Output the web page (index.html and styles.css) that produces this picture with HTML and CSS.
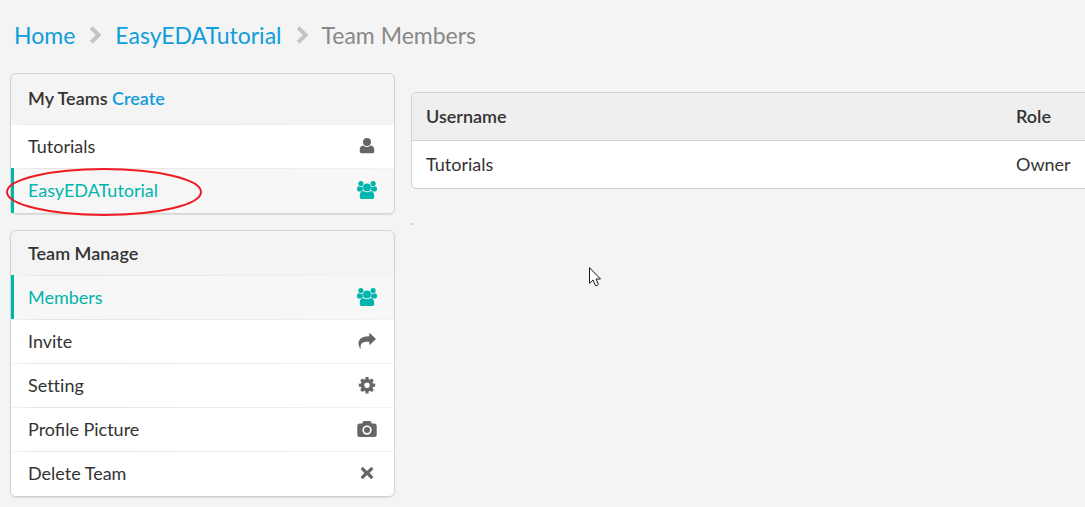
FILE: index.html
```html
<!DOCTYPE html>
<html lang="en">
<head>
<meta charset="utf-8">
<meta name="viewport" content="width=device-width, initial-scale=1">
<title>Team Members</title>
<link rel="stylesheet" href="styles.css">
</head>
<body>
<svg class="sprite" aria-hidden="true">
  <symbol id="users" viewBox="0 0 20 18">
    <circle cx="3.900" cy="2.600" r="2.600"/><circle cx="16.100" cy="2.600" r="2.600"/>
    <path d="M1.800 5.200Q3.900 6.600 5.800 5.500Q5.300 7.700 6.400 9Q5 9.300 4.200 10.500H1.800Q0 10.400 0 8.400Q0 5.200 1.800 5.200ZM18.200 5.200Q16.100 6.600 14.200 5.500Q14.700 7.700 13.600 9Q15 9.300 15.800 10.500H18.200Q20 10.400 20 8.400Q20 5.200 18.200 5.200Z"/>
    <circle cx="10" cy="6.400" r="3.900"/>
    <path d="M6.200 9.900Q10 12.700 13.800 9.900C16.600 10 17.200 12.800 17.200 15.400Q17.200 18 14.700 18H5.300Q2.800 18 2.800 15.400C2.800 12.800 3.400 10 6.200 9.900Z"/>
  </symbol>
  <symbol id="user" viewBox="0 0 20 18">
    <circle cx="10" cy="5" r="4"/>
    <path d="M6.200 8.400Q10 11.500 13.800 8.400C16.600 8.600 17.300 11.300 17.300 13.700Q17.300 16.300 14.800 16.300H5.200Q2.700 16.300 2.700 13.700C2.700 11.300 3.400 8.600 6.200 8.400Z"/>
  </symbol>
  <symbol id="share" viewBox="0 0 20 18">
    <path d="M12.300 1.600Q12.400.900 13 1.300L18.500 6.500Q19 7 18.500 7.500L13 12.700Q12.300 13 12.300 12.300V9.700C6 9.500 3.200 10.700 3.700 16Q3.600 17.100 2.900 16.200C-.3 10.600 1.500 4.200 12.300 4.200Z"/>
  </symbol>
  <symbol id="cog" viewBox="0 0 20 18">
    <path fill-rule="evenodd" d="M8.600 1h2.800l.4 2.200 1.100.5 1.900-1.300 2 2-1.300 1.900.5 1.100 2.200.4v2.800l-2.200.4-.5 1.100 1.300 1.900-2 2-1.900-1.300-1.100.5-.4 2.200H8.600l-.4-2.200-1.100-.5-1.900 1.300-2-2 1.300-1.900-.5-1.100L1.800 10.600V7.800L4 7.400l.5-1.100-1.300-1.900 2-2 1.900 1.300 1.100-.5ZM10 6.500a2.700 2.700 0 1 0 0 5.400A2.700 2.700 0 0 0 10 6.500Z"/>
  </symbol>
  <symbol id="camera" viewBox="0 0 20 18">
    <path fill-rule="evenodd" d="M7.200 1H12.800Q13.900 1 14.300 2.300L14.700 3.400H17.200Q19.700 3.400 19.700 5.900V14.500Q19.700 17 17.200 17H2.800Q.3 17 .3 14.500V5.900Q.3 3.400 2.800 3.400H5.300L5.700 2.300Q6.100 1 7.200 1ZM10 5.400a4.700 4.700 0 1 0 0 9.400 4.700 4.700 0 0 0 0-9.400Zm0 1.700a3 3 0 1 1 0 6 3 3 0 0 1 0-6Z"/>
  </symbol>
  <symbol id="close" viewBox="0 0 20 18">
    <path d="M6.300 3.300 10 7l3.700-3.700Q14.200 2.800 14.700 3.300L16 4.600Q16.500 5.100 16 5.600L12.600 9 16 12.400Q16.500 12.900 16 13.400L14.700 14.700Q14.200 15.200 13.700 14.700L10 11l-3.700 3.700Q5.800 15.200 5.300 14.700L4 13.400Q3.500 12.900 4 12.400L7.400 9 4 5.600Q3.500 5.100 4 4.600L5.300 3.300Q5.800 2.800 6.300 3.300Z"/>
  </symbol>
  <symbol id="chevron" viewBox="0 0 12 18">
    <path d="M2.200 1.600 9.600 9 2.200 16.400" fill="none" stroke="currentColor" stroke-width="4"/>
  </symbol>
</svg>

<nav class="breadcrumb" aria-label="Breadcrumb">
  <a href="#">Home</a>
  <svg class="chevron" aria-hidden="true"><use href="#chevron"/></svg>
  <a href="#">EasyEDATutorial</a>
  <svg class="chevron" aria-hidden="true"><use href="#chevron"/></svg>
  <span>Team Members</span>
</nav>

<div class="layout">
  <aside class="sidebar">
    <nav class="card" aria-label="My Teams">
      <h2 class="card-title roomy">My Teams <a href="#">Create</a></h2>
      <a class="item" href="#">Tutorials<svg class="icon" aria-hidden="true"><use href="#user"/></svg></a>
      <a class="item active" href="#">EasyEDATutorial<svg class="icon" aria-hidden="true"><use href="#users"/></svg>
        <svg class="highlight" viewBox="0 0 198 50" aria-hidden="true"><ellipse cx="99" cy="25" rx="97" ry="23"/></svg>
      </a>
    </nav>
    <nav class="card" aria-label="Team Manage">
      <h2 class="card-title">Team Manage</h2>
      <a class="item active" href="#">Members<svg class="icon" aria-hidden="true"><use href="#users"/></svg></a>
      <a class="item" href="#">Invite<svg class="icon" aria-hidden="true"><use href="#share"/></svg></a>
      <a class="item plain" href="#">Setting<svg class="icon" aria-hidden="true"><use href="#cog"/></svg></a>
      <a class="item" href="#">Profile Picture<svg class="icon" aria-hidden="true"><use href="#camera"/></svg></a>
      <a class="item" href="#">Delete Team<svg class="icon" aria-hidden="true"><use href="#close"/></svg></a>
    </nav>
  </aside>
  <main class="content">
    <table class="members">
      <thead><tr><th scope="col">Username</th><th class="role" scope="col">Role</th></tr></thead>
      <tbody><tr><td>Tutorials</td><td>Owner</td></tr></tbody>
    </table>
    <div class="dot"></div>
  </main>
</div>

<svg class="cursor" viewBox="0 0 12 20" aria-hidden="true"><path d="M.5.700V16.300L4 13l2.500 5.600Q8.500 19.200 9.300 17.300L7 12h4.500Z"/></svg>
</body>
</html>
```
FILE: styles.css
```css
* {
  box-sizing: border-box;
}

body {
  margin: 0;
  padding: 19px 0 8px 10px;
  overflow-x: hidden;
  background: #f4f4f4;
  color: #333;
  font: 18px/24px Lato, sans-serif;
}

a {
  color: #109ddb;
  text-decoration: none;
}

.sprite {
  display: none;
}

.breadcrumb {
  display: flex;
  align-items: center;
  gap: 14px;
  margin-bottom: 22px;
  padding-left: 4px;
  color: #888;
  font-size: 23px;
  line-height: 32px;
}

.chevron {
  width: 12px;
  height: 18px;
  color: #c4c4c4;
}

.layout {
  display: flex;
  align-items: flex-start;
  gap: 16px;
}

.sidebar {
  display: grid;
  flex: 0 0 385px;
  gap: 16px;
}

.card {
  border: 1px solid #d2d2d2;
  border-radius: 6px;
  box-shadow: 0 1px 1px #ddd;
}

.card-title {
  margin: 0;
  padding: 10px 17px;
  font-size: 18px;
  font-weight: 600;
  line-height: 24px;
}

.roomy {
  padding: 12px 17px 14px;
}

.item {
  position: relative;
  display: flex;
  align-items: center;
  justify-content: space-between;
  padding: 10px 17px;
  background: linear-gradient(to right, #f5f5f5, #e4e4e4 30px, #f2f2f2) top / 100% 1px no-repeat #fff;
  color: #333;
}

.item:last-child {
  padding-bottom: 11px;
  border-radius: 0 0 5px 5px;
}

.active {
  background-color: #f7f7f7;
  color: #00b5ad;
}

.active::before {
  position: absolute;
  inset: 0 auto 0 0;
  width: 3px;
  background: #00b5ad;
  content: "";
}

.plain {
  font-variant-ligatures: none;
}

.icon {
  width: 20px;
  height: 18px;
  fill: #666;
}

.active .icon {
  fill: #00b5ad;
}

.highlight {
  position: absolute;
  top: -1px;
  left: -6px;
  width: 198px;
  height: 50px;
  fill: none;
  stroke: #ed1c24;
  stroke-width: 2;
}

.content {
  flex: 1;
  min-width: 0;
  padding-top: 19px;
}

.members {
  width: calc(100% + 40px);
  border: 1px solid #d2d2d2;
  border-radius: 5px;
  border-spacing: 0;
  background: #fff;
}

.members th,
.members td {
  padding: 11px 14px 12px;
  text-align: left;
}

.members th {
  border-bottom: 1px solid #d2d2d2;
  background: #efefef;
  font-weight: 600;
}

.members th:first-child {
  border-top-left-radius: 4px;
}

.members .role {
  width: 122px;
}

.dot {
  width: 2px;
  height: 2px;
  margin-top: 34px;
  background: #ccc;
}

.cursor {
  position: absolute;
  top: 267px;
  left: 589px;
  width: 12px;
  height: 20px;
  fill: #fff;
  stroke: #15151f;
}
```
